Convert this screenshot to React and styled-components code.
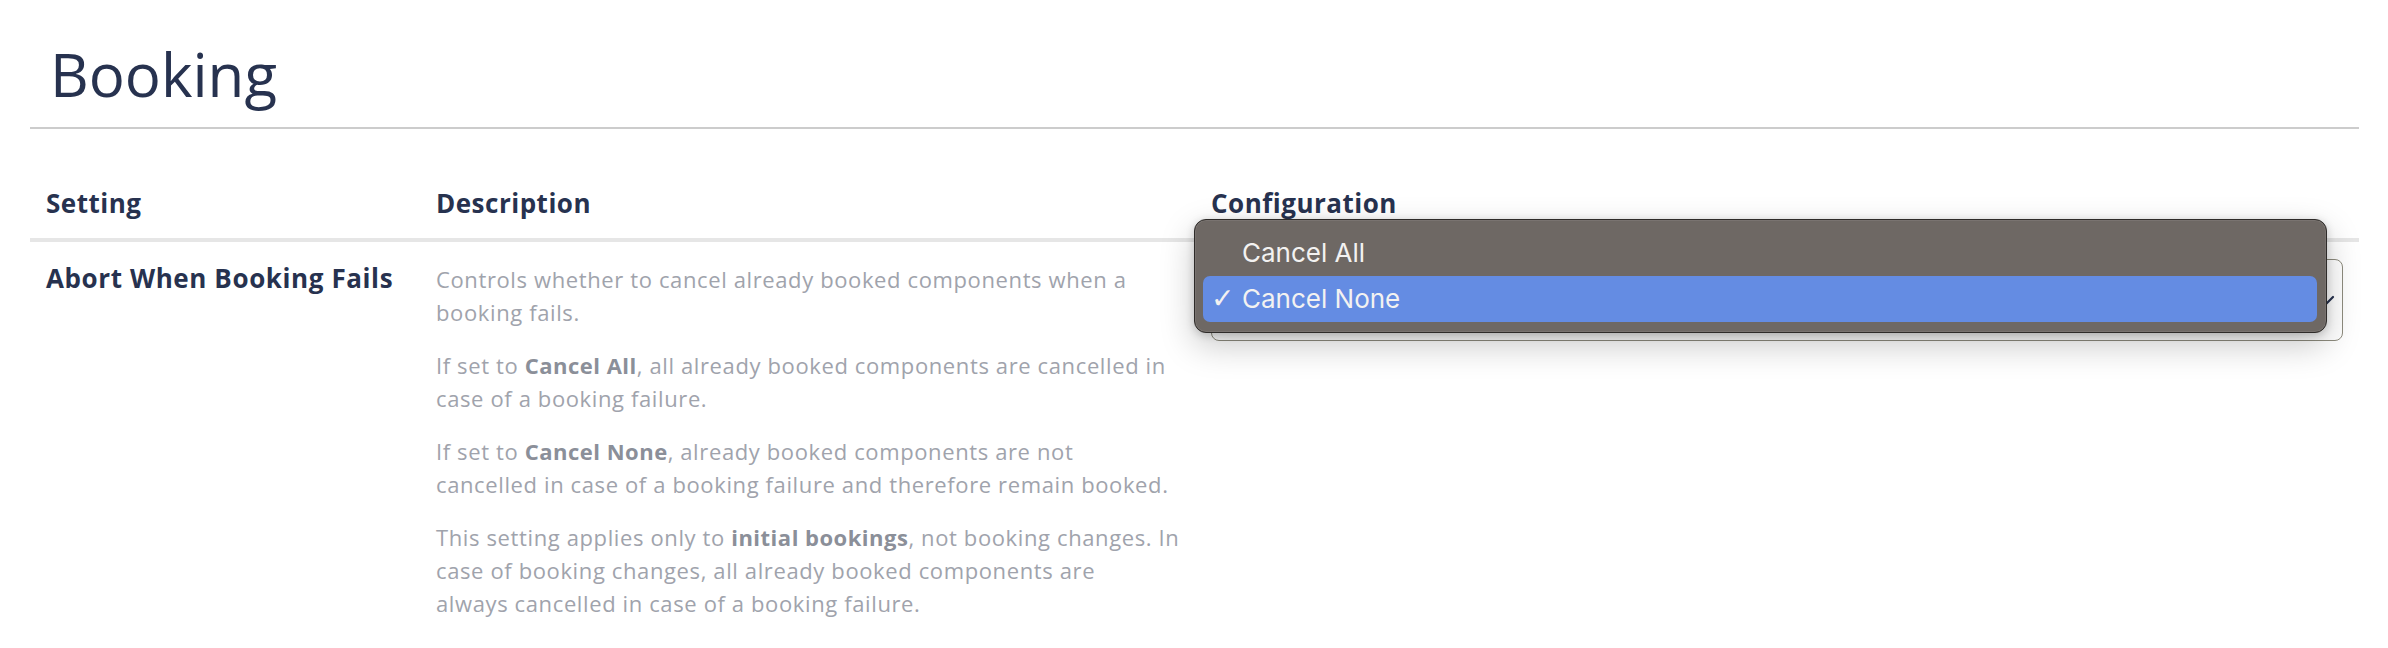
import React from 'react';
import styled, { createGlobalStyle } from 'styled-components';

const GlobalStyle = createGlobalStyle`
  html, body {
    margin: 0;
    padding: 0;
    background: #ffffff;
  }
  body {
    font-family: "Open Sans", "Noto Sans", sans-serif;
    color: #27324f;
  }
`;

const Page = styled.div`
  padding: 38px 29px 40px 30px;
`;

const Title = styled.h1`
  margin: 0 0 17px;
  padding-left: 20px;
  font-size: 60px;
  line-height: 72px;
  font-weight: 400;
  color: #27324f;
`;

const Rule = styled.hr`
  margin: 0;
  border: none;
  height: 2px;
  background: #cccccc;
`;

const Table = styled.div`
  display: grid;
  grid-template-columns: 390px 775px 1fr;
  margin-top: 40px;
`;

const HeadCell = styled.div`
  padding: 16px 16px 17px;
  font-size: 26px;
  line-height: 36px;
  font-weight: 700;
  letter-spacing: 0.5px;
  color: #27324f;
  border-bottom: 4px solid #e6e6e6;
`;

const Cell = styled.div`
  padding: ${(p) => p.$top}px ${(p) => p.$right || 16}px 16px 16px;
  min-width: 0;
`;

const SettingName = styled.div`
  font-size: 26px;
  line-height: 36px;
  font-weight: 700;
  letter-spacing: 0.6px;
  color: #27324f;
`;

const Paragraph = styled.p`
  margin: 0 0 20px;
  font-size: 22px;
  line-height: 33px;
  letter-spacing: 0.62px;
  color: #a0a3ac;

  &:last-child {
    margin-bottom: 0;
  }

  strong {
    font-weight: 700;
    letter-spacing: 0.5px;
    color: #8b8f99;
  }
`;

const SelectWrap = styled.div`
  position: relative;
`;

const SelectBox = styled.div`
  box-sizing: border-box;
  height: 82px;
  border: 1.5px solid #8e8c7e;
  border-radius: 8px;
  display: flex;
  align-items: center;
  justify-content: flex-end;
  padding-right: 6px;
  color: #27324f;
`;

const Popup = styled.div`
  position: absolute;
  left: -17px;
  top: -40px;
  width: 1133px;
  box-sizing: border-box;
  padding: 10px 9px 10px 8px;
  background: #6e6864;
  border: 1px solid #2e2b29;
  border-radius: 12px;
  box-shadow: 0 0 0 1px rgba(255, 255, 255, 0.08) inset,
    0 12px 34px rgba(0, 0, 0, 0.22), 0 2px 8px rgba(0, 0, 0, 0.18);
  font-family: Inter, "Liberation Sans", sans-serif;
`;

const Option = styled.div`
  display: flex;
  align-items: center;
  height: 46px;
  padding-left: 8px;
  border-radius: 7px;
  font-size: 26px;
  line-height: 46px;
  color: #f3f2f1;
  background: ${(p) => (p.$active ? '#648ce3' : 'transparent')};
`;

const Check = styled.span`
  display: inline-block;
  width: 31px;
  font-family: "DejaVu Sans", sans-serif;
  font-size: 28px;
  font-weight: 700;
`;

const Chevron = () => (
  <svg width="20" height="14" viewBox="0 0 20 14" fill="none">
    <path d="M3 4l7 7 7-7" stroke="#27324f" strokeWidth="2.2" strokeLinecap="round" strokeLinejoin="round" />
  </svg>
);

const App = () => (
  <Page>
    <GlobalStyle />
    <Title>Booking</Title>
    <Rule />
    <Table>
      <HeadCell>Setting</HeadCell>
      <HeadCell>Description</HeadCell>
      <HeadCell>Configuration</HeadCell>

      <Cell $top={18}>
        <SettingName>Abort When Booking Fails</SettingName>
      </Cell>
      <Cell $top={21} $right={6}>
        <Paragraph>
          Controls whether to cancel already booked components when a<br />
          booking fails.
        </Paragraph>
        <Paragraph>
          If set to <strong>Cancel All</strong>, all already booked components are cancelled in<br />
          case of a booking failure.
        </Paragraph>
        <Paragraph>
          If set to <strong>Cancel None</strong>, already booked components are not<br />
          cancelled in case of a booking failure and therefore remain booked.
        </Paragraph>
        <Paragraph>
          This setting applies only to <strong>initial bookings</strong>, not booking changes. In<br />
          case of booking changes, all already booked components are<br />
          always cancelled in case of a booking failure.
        </Paragraph>
      </Cell>
      <Cell $top={17}>
        <SelectWrap>
          <SelectBox>
            <Chevron />
          </SelectBox>
          <Popup>
            <Option>
              <Check />
              Cancel All
            </Option>
            <Option $active>
              <Check>✓</Check>
              Cancel None
            </Option>
          </Popup>
        </SelectWrap>
      </Cell>
    </Table>
  </Page>
);

export default App;
